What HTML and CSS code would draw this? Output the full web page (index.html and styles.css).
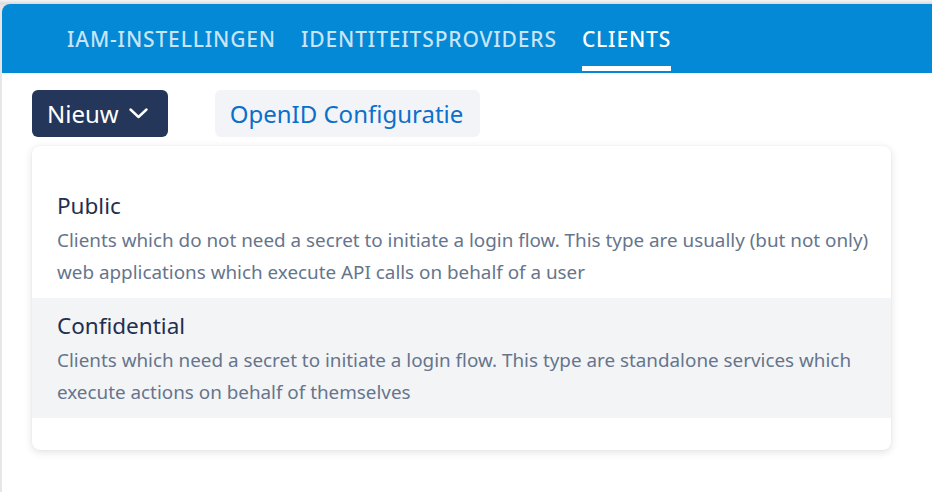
FILE: index.html
```html
<!DOCTYPE html>
<html lang="nl">
<head>
  <meta charset="UTF-8">
  <meta name="viewport" content="width=device-width, initial-scale=1.0">
  <title>Clients</title>
  <link rel="stylesheet" href="styles.css">
</head>
<body>
  <div class="panel">
    <nav class="tabs">
      <a class="tab">IAM-INSTELLINGEN</a>
      <a class="tab">IDENTITEITSPROVIDERS</a>
      <a class="tab active">CLIENTS</a>
    </nav>

    <div class="toolbar">
      <button class="btn btn-new">
        Nieuw
        <svg class="chevron" width="19" height="11" viewBox="0 0 19 11">
          <path d="M1.5 1.5 L9.5 9 L17.5 1.5" fill="none" stroke="#fff" stroke-width="2.4" stroke-linecap="round" stroke-linejoin="round"/>
        </svg>
      </button>
      <button class="btn btn-config">OpenID Configuratie</button>
    </div>

    <div class="menu">
      <div class="menu-item">
        <div class="item-title">Public</div>
        <div class="item-desc">Clients which do not need a secret to initiate a login flow. This type are usually (but not only) web applications which execute API calls on behalf of a user</div>
      </div>
      <div class="menu-item hover">
        <div class="item-title">Confidential</div>
        <div class="item-desc">Clients which need a secret to initiate a login flow. This type are standalone services which execute actions on behalf of themselves</div>
      </div>
    </div>
  </div>
</body>
</html>
```

FILE: styles.css
```css
body {
  font-family: "Noto Sans", Arial, sans-serif;
  margin: 0;
  padding: 4px 0 0 2px;
  background: linear-gradient(#f4f4f4, #d9d9d9 4px, #e6e6e6 5px);
  overflow: hidden;
}
.panel {
  background-color: #fff;
  border-top-left-radius: 8px;
  min-height: calc(100vh - 4px);
  overflow: hidden;
}
.tabs {
  background-color: #0389d6;
  display: flex;
  gap: 25px;
  height: 69px;
  padding-left: 65px;
}
.tab {
  display: flex;
  align-items: center;
  padding-top: 8px;
  margin-bottom: 2px;
  border-bottom: 5px solid transparent;
  font-size: 21px;
  font-weight: 500;
  letter-spacing: 0.85px;
  color: rgba(255, 255, 255, 0.78);
  cursor: pointer;
}
.tab.active {
  color: #fff;
  border-bottom-color: #fff;
}
.toolbar {
  display: flex;
  gap: 47px;
  padding: 17px 30px 0;
}
.btn {
  display: inline-flex;
  align-items: center;
  height: 47px;
  padding: 0 15px;
  border: none;
  border-radius: 6px;
  font-family: inherit;
  font-size: 24px;
  cursor: pointer;
}
.btn-new {
  background-color: #243659;
  color: #fff;
  padding-right: 20px;
}
.chevron {
  margin-left: 10px;
}
.btn-config {
  background-color: #f2f4f7;
  color: #0b6fcc;
  padding: 0 17px 0 15px;
}
.menu {
  width: 859px;
  margin: 9px 0 0 30px;
  padding: 32px 0;
  background-color: #fff;
  border-radius: 8px;
  box-shadow: 0 2px 8px rgba(0, 0, 0, 0.12), 0 0 2px rgba(0, 0, 0, 0.06);
}
.menu-item {
  padding: 10px 16px 10px 25px;
}
.menu-item.hover {
  background-color: #f3f4f6;
}
.item-title {
  font-size: 22.5px;
  line-height: 36px;
  color: #1f2f52;
}
.item-desc {
  font-size: 18.85px;
  line-height: 32px;
  color: #66758c;
}
```
